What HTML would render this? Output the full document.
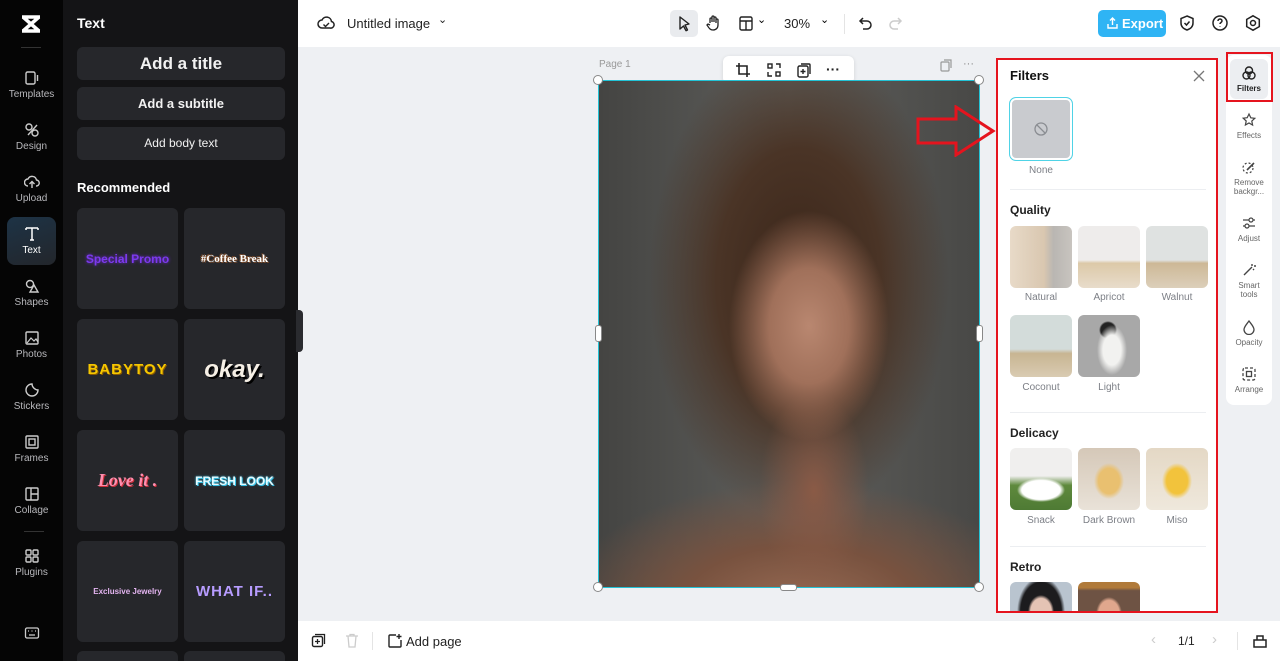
<!DOCTYPE html>
<html><head><meta charset="utf-8">
<style>
*{box-sizing:border-box;margin:0;padding:0}
html{width:1280px;height:661px;overflow:hidden}
body{width:1280px;height:661px;overflow:hidden;font-family:"Liberation Sans",sans-serif;background:#eef0f3;position:relative}
.abs{position:absolute}
#rail{left:0;top:0;width:63px;height:661px;background:#050505}
#panel{left:63px;top:0;width:235px;height:661px;background:#141416;overflow:hidden}
.ri{position:absolute;left:0;width:63px;text-align:center;color:#b8b8bc;font-size:10px}
.ri svg{display:block;margin:0 auto 3px}
.btn{position:absolute;left:14px;width:208px;background:#26272b;border-radius:6px;color:#f2f2f2;text-align:center;font-weight:bold}
.card{position:absolute;width:101px;height:101px;background:#26272b;border-radius:6px;display:flex;align-items:center;justify-content:center;font-weight:bold}
#top{left:298px;top:0;width:982px;height:47px;background:#fff}
#bot{left:298px;top:621px;width:982px;height:40px;background:#fff}
#fp{left:996px;top:58px;width:222px;height:555px;background:#fff;border:2px solid #e5141e;overflow:hidden}
.lab{position:absolute;font-size:10px;color:#7c7f86;text-align:center;width:62px}
.th{position:absolute;width:62px;height:62px;border-radius:6px}
.h{position:absolute;left:12px;font-size:12px;font-weight:bold;color:#222}
.sep{position:absolute;left:12px;width:196px;height:1px;background:#eceef1}
#rr{left:1226px;top:55px;width:46px;height:350px;background:#fff;border-radius:8px}
.rt{position:absolute;left:0;width:46px;text-align:center;font-size:8px;color:#666;line-height:9px}
.rt svg{display:block;margin:0 auto 3px}
.hd{position:absolute;width:10px;height:10px;border-radius:50%;background:#fff;border:1px solid #888}
</style></head><body>
<div id="rail" class="abs">
 <div class="abs" style="left:19px;top:14px;width:24px;height:20px">
  <svg width="24" height="20" viewBox="0 0 24 20"><path d="M3 3h18M3 17h18M4 3l16 14M20 3L4 17" stroke="#fff" stroke-width="3.5" fill="none"/></svg></div>
 <div class="abs" style="left:21px;top:47px;width:20px;height:1px;background:#333"></div>
 <div class="ri" style="top:70px"><svg width="16" height="16"><rect x="2" y="2" width="9" height="12" rx="1.5" stroke="#ccc" fill="none" stroke-width="1.4"/><path d="M13.5 5v6" stroke="#ccc" stroke-width="1.4"/></svg>Templates</div>
 <div class="ri" style="top:122px"><svg width="16" height="16"><circle cx="5" cy="5" r="3" stroke="#ccc" fill="none" stroke-width="1.4"/><circle cx="11" cy="11" r="3" stroke="#ccc" fill="none" stroke-width="1.4"/><path d="M4 13L13 3" stroke="#ccc" stroke-width="1.4"/></svg>Design</div>
 <div class="ri" style="top:174px"><svg width="16" height="16"><path d="M4 12a3.5 3.5 0 010-7 4.5 4.5 0 018.5 1A3 3 0 0112 12M8 8v6M5.5 10L8 7.5 10.5 10" stroke="#ccc" fill="none" stroke-width="1.4"/></svg>Upload</div>
 <div class="abs" style="left:7px;top:217px;width:49px;height:48px;border-radius:8px;background:linear-gradient(160deg,#1d3346,#23262b)"></div>
 <div class="ri" style="top:225px;color:#fff"><svg width="16" height="17"><path d="M2 3h12M8 3v12M2 3v2M14 3v2M6 15h4" stroke="#fff" fill="none" stroke-width="1.5"/></svg>Text</div>
 <div class="ri" style="top:278px"><svg width="16" height="16"><circle cx="6" cy="6" r="3.5" stroke="#ccc" fill="none" stroke-width="1.4"/><path d="M10 7l4 7H6z" stroke="#ccc" fill="none" stroke-width="1.4"/></svg>Shapes</div>
 <div class="ri" style="top:330px"><svg width="16" height="16"><rect x="2" y="2" width="12" height="12" rx="1" stroke="#ccc" fill="none" stroke-width="1.4"/><path d="M3 13l4-5 3 3 2-2 2 3" stroke="#ccc" fill="none" stroke-width="1.2"/></svg>Photos</div>
 <div class="ri" style="top:382px"><svg width="16" height="16"><path d="M14 8A6 6 0 118 2c0 3 3 6 6 6z" stroke="#ccc" fill="none" stroke-width="1.4"/></svg>Stickers</div>
 <div class="ri" style="top:434px"><svg width="16" height="16"><rect x="2" y="2" width="12" height="12" rx="1" stroke="#ccc" fill="none" stroke-width="1.4"/><rect x="5" y="5" width="6" height="6" stroke="#ccc" fill="none" stroke-width="1.4"/></svg>Frames</div>
 <div class="ri" style="top:486px"><svg width="16" height="16"><rect x="2" y="2" width="12" height="12" rx="1" stroke="#ccc" fill="none" stroke-width="1.4"/><path d="M7 2v12M7 8h7" stroke="#ccc" stroke-width="1.4"/></svg>Collage</div>
 <div class="abs" style="left:24px;top:531px;width:20px;height:1px;background:#333"></div>
 <div class="ri" style="top:548px"><svg width="16" height="16"><rect x="2" y="2" width="5" height="5" rx="1" stroke="#ccc" fill="none" stroke-width="1.4"/><rect x="9" y="2" width="5" height="5" rx="1" stroke="#ccc" fill="none" stroke-width="1.4"/><rect x="2" y="9" width="5" height="5" rx="1" stroke="#ccc" fill="none" stroke-width="1.4"/><rect x="9" y="9" width="5" height="5" rx="1" stroke="#ccc" fill="none" stroke-width="1.4"/></svg>Plugins</div>
 <div class="ri" style="top:626px"><svg width="16" height="14"><rect x="1.5" y="2" width="13" height="10" rx="1.5" stroke="#ccc" fill="none" stroke-width="1.3"/><path d="M4 5h1M7.5 5h1M11 5h1M5 9h6" stroke="#ccc" stroke-width="1.3"/></svg></div>
</div>
<div id="panel" class="abs">
 <div class="abs" style="left:14px;top:15px;color:#fff;font-weight:bold;font-size:14px">Text</div>
 <div class="btn" style="top:47px;height:33px;line-height:33px;font-size:17px">Add a title</div>
 <div class="btn" style="top:87px;height:33px;line-height:33px;font-size:13px">Add a subtitle</div>
 <div class="btn" style="top:127px;height:33px;line-height:33px;font-size:12px;font-weight:normal">Add body text</div>
 <div class="abs" style="left:14px;top:180px;color:#fff;font-weight:bold;font-size:13px">Recommended</div>
 <div class="card" style="left:14px;top:208px;color:#7c3aed;font-size:12px;text-shadow:0 0 3px #6d28d9">Special Promo</div>
 <div class="card" style="left:121px;top:208px;color:#fff;font-size:11px;font-family:'Liberation Serif',serif;text-shadow:1px 1px 0 #7a4a2a,-1px -1px 0 #7a4a2a">#Coffee Break</div>
 <div class="card" style="left:14px;top:319px;color:#f6c700;font-size:15px;letter-spacing:1px;text-shadow:1px 1px 0 #8a5a00">BABYTOY</div>
 <div class="card" style="left:121px;top:319px;color:#f5efe5;font-size:24px;font-style:italic;text-shadow:2px 2px 0 #000">okay.</div>
 <div class="card" style="left:14px;top:430px;color:#ff8fb0;font-size:18px;font-style:italic;font-family:'Liberation Serif',serif;text-shadow:1px 1px 0 #d0303a">Love it .</div>
 <div class="card" style="left:121px;top:430px;color:#e6fbff;font-size:12px;text-shadow:0 0 2px #39c3e8,1px 1px 0 #39c3e8">FRESH LOOK</div>
 <div class="card" style="left:14px;top:541px;color:#e3b4f0;font-size:8px">Exclusive Jewelry</div>
 <div class="card" style="left:121px;top:541px;color:#b79cff;font-size:15px;letter-spacing:1px">WHAT IF..</div>
 <div class="card" style="left:14px;top:651px;height:10px;border-radius:6px 6px 0 0"></div><div class="card" style="left:121px;top:651px;height:10px;border-radius:6px 6px 0 0"></div>
 <div class="abs" style="left:233px;top:310px;width:2px;height:42px;background:#2a2b2f"></div>
</div>
<div class="abs" style="left:296px;top:310px;width:7px;height:42px;border-radius:0 4px 4px 0;background:#2a2b2f"></div>
<div id="top" class="abs">
 <svg class="abs" style="left:19px;top:15px" width="18" height="16"><path d="M5 13a4 4 0 010-8 5 5 0 019.5 1.5A3.3 3.3 0 0113 13z" stroke="#222" fill="none" stroke-width="1.5"/><path d="M6.5 9.5l2 2 3.5-3.5" stroke="#222" fill="none" stroke-width="1.4"/></svg>
 <div class="abs" style="left:49px;top:16px;font-size:13px;color:#222">Untitled image</div>
 <div class="abs" style="left:140px;top:13px;font-size:11px;color:#222">&#8964;</div>
 <div class="abs" style="left:372px;top:10px;width:28px;height:27px;border-radius:5px;background:#e9ebee"></div>
 <svg class="abs" style="left:379px;top:15px" width="14" height="18"><path d="M3 2l9 7-4 1 2.5 5-1.5.7L6.5 11 3 14z" stroke="#222" fill="none" stroke-width="1.4" stroke-linejoin="round"/></svg>
 <svg class="abs" style="left:408px;top:14px" width="16" height="18"><path d="M4 9V5a1 1 0 012 0v3V3a1 1 0 012 0v5V4a1 1 0 012 0v5V6a1 1 0 012 0v5c0 3-2 5-5 5s-4-2-6-5l1-1 2 1" stroke="#222" fill="none" stroke-width="1.3"/></svg>
 <svg class="abs" style="left:440px;top:15px" width="16" height="16"><rect x="2" y="2" width="12" height="13" rx="1.5" stroke="#222" fill="none" stroke-width="1.4"/><path d="M2 6h12M8 6v9" stroke="#222" stroke-width="1.4"/></svg>
 <div class="abs" style="left:459px;top:13px;font-size:11px">&#8964;</div>
 <div class="abs" style="left:486px;top:16px;font-size:13px;color:#222">30%</div>
 <div class="abs" style="left:522px;top:13px;font-size:11px">&#8964;</div>
 <div class="abs" style="left:546px;top:14px;width:1px;height:20px;background:#e4e4e4"></div>
 <svg class="abs" style="left:560px;top:15px" width="16" height="16"><path d="M5 3L2 6l3 3M2 6h7a4 4 0 010 8H5" stroke="#222" fill="none" stroke-width="1.5"/></svg>
 <svg class="abs" style="left:589px;top:15px" width="16" height="16"><path d="M11 3l3 3-3 3M14 6H7a4 4 0 000 8h4" stroke="#ccc" fill="none" stroke-width="1.5"/></svg>
 <div class="abs" style="left:800px;top:10px;width:68px;height:27px;border-radius:5px;background:#2fb4f4;color:#fff;font-size:13px;font-weight:bold;line-height:27px;padding-left:24px">Export</div>
 <svg class="abs" style="left:808px;top:16px" width="13" height="13"><path d="M2 8v4h9V8M6.5 9V2M4 4.5L6.5 2 9 4.5" stroke="#fff" fill="none" stroke-width="1.4"/></svg>
 <svg class="abs" style="left:880px;top:14px" width="18" height="18"><path d="M9 2l6 2.5V9c0 4-3 6-6 7-3-1-6-3-6-7V4.5z" stroke="#222" fill="none" stroke-width="1.5"/><path d="M6.5 9l2 2 3-3.5" stroke="#222" fill="none" stroke-width="1.5"/></svg>
 <svg class="abs" style="left:913px;top:14px" width="18" height="18"><circle cx="9" cy="9" r="7" stroke="#222" fill="none" stroke-width="1.5"/><path d="M7 7a2 2 0 114 0c0 1.5-2 1.5-2 3M9 12.5v.5" stroke="#222" fill="none" stroke-width="1.5"/></svg>
 <svg class="abs" style="left:946px;top:14px" width="18" height="18"><path d="M9 1.8l6.3 3.6v7.2L9 16.2 2.7 12.6V5.4z" stroke="#222" fill="none" stroke-width="1.5"/><circle cx="9" cy="9" r="2.5" stroke="#222" fill="none" stroke-width="1.5"/></svg>
</div>
<div class="abs" style="left:599px;top:59px;font-size:10px;color:#999">Page 1</div>
<div class="abs" style="left:723px;top:56px;width:131px;height:28px;background:#fff;border-radius:6px;box-shadow:0 1px 4px rgba(0,0,0,.12)"></div>
<svg class="abs" style="left:735px;top:62px" width="16" height="16"><path d="M4 1v11h11M1 4h11v11" stroke="#222" fill="none" stroke-width="1.6"/></svg>
<svg class="abs" style="left:766px;top:62px" width="16" height="16"><rect x="2" y="2" width="4" height="4" stroke="#222" fill="none" stroke-width="1.4"/><rect x="10" y="10" width="4" height="4" stroke="#222" fill="none" stroke-width="1.4"/><path d="M10 2h4v4M2 10v4h4" stroke="#222" fill="none" stroke-width="1.4"/></svg>
<svg class="abs" style="left:796px;top:62px" width="16" height="16"><rect x="2" y="4" width="10" height="11" rx="1.5" stroke="#222" fill="none" stroke-width="1.4"/><path d="M5 2h8a1 1 0 011 1v9M7 7v5M4.5 9.5h5" stroke="#222" fill="none" stroke-width="1.4"/></svg>
<div class="abs" style="left:826px;top:61px;font-size:14px;font-weight:bold;color:#222">&middot;&middot;&middot;</div>
<svg class="abs" style="left:940px;top:59px" width="13" height="13"><rect x="1" y="3" width="8" height="9" rx="1" stroke="#999" fill="none" stroke-width="1.2"/><path d="M4 1h7v8" stroke="#999" fill="none" stroke-width="1.2"/></svg>
<div class="abs" style="left:963px;top:58px;font-size:11px;color:#888">&middot;&middot;&middot;</div>
<div class="abs" style="left:598px;top:80px;width:382px;height:508px;border:1.5px solid #22c3d6;overflow:hidden;background:
radial-gradient(ellipse 80px 115px at 210px 245px,#b98770 0%,#a0705a 50%,rgba(140,95,75,0) 100%),
radial-gradient(ellipse 55px 100px at 215px 410px,#8a5a46 0%,rgba(90,60,45,0) 100%),
radial-gradient(ellipse 240px 130px at 200px 530px,#9a6c55 0%,#78523f 50%,rgba(70,55,45,0) 100%),
radial-gradient(ellipse 150px 240px at 200px 200px,#3a2519 0%,#4a3426 55%,rgba(70,60,50,0) 100%),
linear-gradient(90deg,#444442,#5f5f5c 50%,#484846)">
</div>
<div class="hd" style="left:593px;top:75px"></div><div class="hd" style="left:974px;top:75px"></div>
<div class="hd" style="left:593px;top:582px"></div><div class="hd" style="left:974px;top:582px"></div>
<div class="abs" style="left:595px;top:325px;width:7px;height:17px;border-radius:3px;background:#fff;border:1px solid #888"></div>
<div class="abs" style="left:976px;top:325px;width:7px;height:17px;border-radius:3px;background:#fff;border:1px solid #888"></div>
<div class="abs" style="left:780px;top:584px;width:17px;height:7px;border-radius:3px;background:#fff;border:1px solid #888"></div>
<svg class="abs" style="left:916px;top:105px" width="80" height="52"><path d="M2 14h38V2l37 24-37 24V38H2z" fill="none" stroke="#e5141e" stroke-width="3"/></svg>
<div id="fp" class="abs">
 <div class="abs" style="left:12px;top:8px;font-size:13px;font-weight:bold;color:#111">Filters</div>
 <svg class="abs" style="left:195px;top:10px" width="12" height="12"><path d="M1 1l10 10M11 1L1 11" stroke="#777" stroke-width="1.3"/></svg>
 <div class="abs" style="left:11px;top:37px;width:64px;height:64px;border-radius:7px;border:1.5px solid #4fd3e6;background:#c9cbcf;box-shadow:inset 0 0 0 2px #fff"></div>
 <svg class="abs" style="left:35px;top:61px" width="16" height="16"><circle cx="8" cy="8" r="6" stroke="#8a8d92" fill="none" stroke-width="1.3"/><path d="M4 4l8 8" stroke="#8a8d92" stroke-width="1.3"/></svg>
 <div class="lab" style="left:12px;top:105px">None</div>
 <div class="sep" style="top:129px"></div>
 <div class="h" style="top:143px">Quality</div>
 <div class="th" style="left:12px;top:166px;background:linear-gradient(90deg,#e8dac8 0%,#d9c7b0 55%,#b9b6b2 70%,#c8c4bf)"></div>
 <div class="th" style="left:80px;top:166px;background:linear-gradient(#eeeceb 55%,#dcc9a8 60%,#e8dccb)"></div>
 <div class="th" style="left:148px;top:166px;background:linear-gradient(#dfe2e1 55%,#cdb896 60%,#dccfba)"></div>
 <div class="lab" style="left:12px;top:232px">Natural</div><div class="lab" style="left:80px;top:232px">Apricot</div><div class="lab" style="left:148px;top:232px">Walnut</div>
 <div class="th" style="left:12px;top:255px;background:linear-gradient(#d3dcda 55%,#c8b592 62%,#d9cbb2)"></div>
 <div class="th" style="left:80px;top:255px;background:radial-gradient(ellipse 15px 25px at 34px 35px,#f2f2f0 60%,rgba(0,0,0,0)),radial-gradient(circle 9px at 30px 15px,#222 80%,rgba(0,0,0,0)),#a8a8a8"></div>
 <div class="lab" style="left:12px;top:322px">Coconut</div><div class="lab" style="left:80px;top:322px">Light</div>
 <div class="sep" style="top:352px"></div>
 <div class="h" style="top:366px">Delicacy</div>
 <div class="th" style="left:12px;top:388px;background:radial-gradient(ellipse 24px 12px at 31px 42px,#fff 80%,rgba(0,0,0,0)),linear-gradient(#f0efee 45%,#5f8a3d 60%,#4e7a34)"></div>
 <div class="th" style="left:80px;top:388px;background:radial-gradient(ellipse 15px 18px at 31px 33px,#e9c070 70%,rgba(0,0,0,0)),linear-gradient(#d5c8b8,#e9e2d8)"></div>
 <div class="th" style="left:148px;top:388px;background:radial-gradient(ellipse 15px 18px at 31px 33px,#f2c33c 70%,rgba(0,0,0,0)),linear-gradient(#e4d8c5,#efe8dc)"></div>
 <div class="lab" style="left:12px;top:455px">Snack</div><div class="lab" style="left:80px;top:455px">Dark Brown</div><div class="lab" style="left:148px;top:455px">Miso</div>
 <div class="sep" style="top:486px"></div>
 <div class="h" style="top:500px">Retro</div>
 <div class="th" style="left:12px;top:522px;height:29px;border-radius:6px 6px 0 0;background:radial-gradient(ellipse 13px 17px at 31px 30px,#e4c3b4 80%,rgba(0,0,0,0)),radial-gradient(ellipse 24px 35px at 31px 30px,#1c1c1e 85%,rgba(0,0,0,0)),#b9c4cf"></div>
 <div class="th" style="left:80px;top:522px;height:29px;border-radius:6px 6px 0 0;background:radial-gradient(ellipse 13px 17px at 31px 32px,#e0a78d 80%,rgba(0,0,0,0)),linear-gradient(#b07a3a 20%,#6e5344 30%)"></div>
</div>
<div id="rr" class="abs">
 <div class="abs" style="left:4px;top:4px;width:38px;height:40px;border-radius:6px;background:#eceef1"></div>
 <div class="abs" style="left:0px;top:-3px;width:47px;height:50px;border:2px solid #e5141e"></div>
 <div class="rt" style="top:10px;color:#222;font-weight:bold"><svg width="16" height="16"><circle cx="8" cy="5.5" r="3.5" stroke="#222" fill="none" stroke-width="1.4"/><circle cx="5.5" cy="10.5" r="3.5" stroke="#222" fill="none" stroke-width="1.4"/><circle cx="10.5" cy="10.5" r="3.5" stroke="#222" fill="none" stroke-width="1.4"/></svg>Filters</div>
 <div class="rt" style="top:57px"><svg width="16" height="16"><path d="M8 2l1.8 3.8 4 .5-3 2.8.8 4L8 11l-3.6 2 .8-4-3-2.8 4-.5z" stroke="#444" fill="none" stroke-width="1.2"/></svg>Effects</div>
 <div class="rt" style="top:104px"><svg width="16" height="16"><circle cx="7" cy="9" r="5" stroke="#444" fill="none" stroke-width="1.2" stroke-dasharray="2 2"/><path d="M6 11l7-7" stroke="#444" stroke-width="1.6"/></svg>Remove<br>backgr...</div>
 <div class="rt" style="top:160px"><svg width="16" height="16"><path d="M2 5h12M2 11h12" stroke="#444" stroke-width="1.2"/><circle cx="10" cy="5" r="2" fill="#fff" stroke="#444" stroke-width="1.2"/><circle cx="6" cy="11" r="2" fill="#fff" stroke="#444" stroke-width="1.2"/></svg>Adjust</div>
 <div class="rt" style="top:207px"><svg width="16" height="16"><path d="M3 13l8-8M11 2v2M13 4h2M12 7l1 1" stroke="#444" stroke-width="1.4"/></svg>Smart<br>tools</div>
 <div class="rt" style="top:264px"><svg width="16" height="16"><path d="M8 2c3 4 5 6 5 8.5a5 5 0 01-10 0C3 8 5 6 8 2z" stroke="#444" fill="none" stroke-width="1.3"/></svg>Opacity</div>
 <div class="rt" style="top:311px"><svg width="16" height="16"><rect x="2" y="2" width="12" height="12" rx="2" stroke="#444" fill="none" stroke-width="1.3" stroke-dasharray="3 2"/><rect x="5.5" y="5.5" width="5" height="5" stroke="#444" fill="none" stroke-width="1.3"/></svg>Arrange</div>
</div>
<div id="bot" class="abs">
 <svg class="abs" style="left:13px;top:12px" width="15" height="15"><rect x="1.5" y="3.5" width="10" height="10" rx="1.5" stroke="#222" fill="none" stroke-width="1.4"/><path d="M4 1.5h9.5V11M6.5 6v5M4 8.5h5" stroke="#222" fill="none" stroke-width="1.3"/></svg>
 <svg class="abs" style="left:47px;top:12px" width="14" height="15"><path d="M1 3h12M5 3V1.5h4V3M3 3l1 11h6l1-11" stroke="#ccc" fill="none" stroke-width="1.3"/></svg>
 <div class="abs" style="left:74px;top:11px;width:1px;height:18px;background:#e4e4e4"></div>
 <svg class="abs" style="left:89px;top:12px" width="16" height="16"><path d="M9 2H3a1 1 0 00-1 1v10a1 1 0 001 1h10a1 1 0 001-1V7" stroke="#222" fill="none" stroke-width="1.4"/><path d="M12 1v5M9.5 3.5h5" stroke="#222" stroke-width="1.4"/></svg>
 <div class="abs" style="left:108px;top:13px;font-size:13px;color:#222">Add page</div>
 <div class="abs" style="left:853px;top:10px;font-size:15px;color:#ccc">&#8249;</div>
 <div class="abs" style="left:880px;top:13px;font-size:12px;color:#222">1/1</div>
 <div class="abs" style="left:914px;top:10px;font-size:15px;color:#ccc">&#8250;</div>
 <div class="abs" style="left:939px;top:11px;width:1px;height:18px;background:#e4e4e4"></div>
 <svg class="abs" style="left:954px;top:12px" width="16" height="15"><path d="M2 7h12v7H2zM5 7V3h6v4" stroke="#222" fill="none" stroke-width="1.5"/></svg>
</div>
</body></html>
